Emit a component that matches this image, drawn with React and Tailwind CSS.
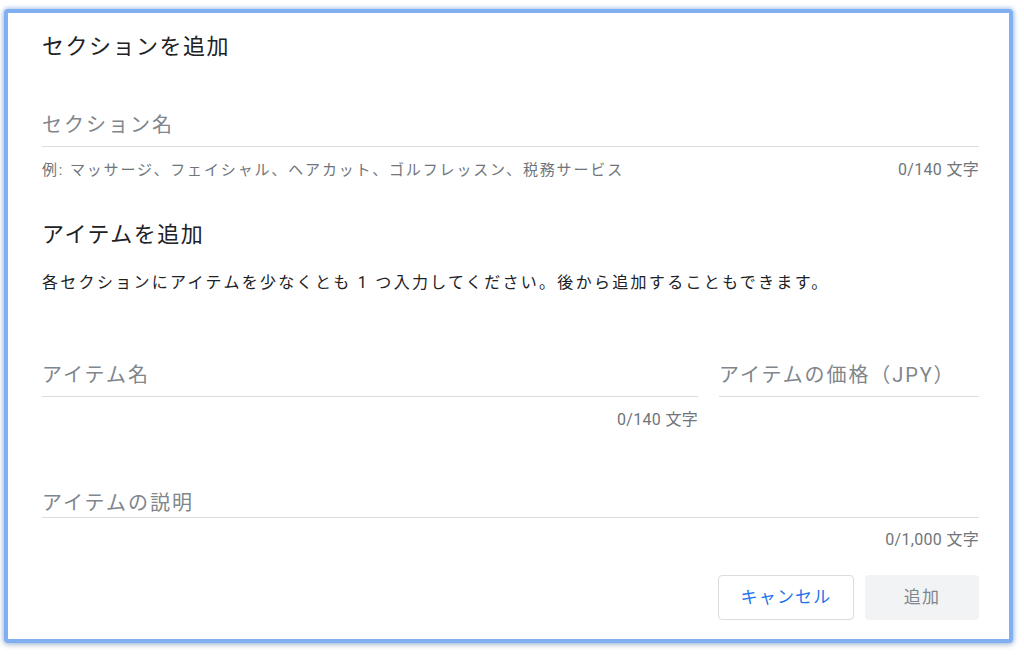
import React from "react";

const font = { fontFamily: 'Roboto, "Noto Sans CJK JP", "Noto Sans", sans-serif' };

export default function App() {
  return (
    <div className="w-[1024px] h-[655px] bg-white overflow-hidden pt-[9px] pl-[4px]" style={font}>
      <div className="w-[1009px] h-[634px] border-[4px] border-[#80b0f2] rounded-[4px] shadow-[0_0_4px_1px_rgba(100,150,230,0.5),0_2px_6px_rgba(0,0,0,0.15)] bg-white pl-[34px] pr-[30px] pt-[20px] flex flex-col">
        <h2 className="text-[22px] leading-[28px] tracking-[1.5px] text-[#202124] font-normal">セクションを追加</h2>

        <div className="mt-[50px] border-b border-[#dadce0] pb-[7px]">
          <div className="text-[20px] leading-[28px] tracking-[2px] text-[#80868b]">セクション名</div>
        </div>
        <div className="mt-[13px] flex justify-between text-[15px] leading-[20px] text-[#70757a]">
          <span className="tracking-[1.85px]">例: マッサージ、フェイシャル、ヘアカット、ゴルフレッスン、税務サービス</span>
          <span className="text-[16px] tracking-[0.3px]">0/140 文字</span>
        </div>

        <h2 className="mt-[41px] text-[22px] leading-[28px] tracking-[1.5px] text-[#202124] font-normal">アイテムを追加</h2>
        <p className="mt-[23px] text-[16px] leading-[22px] tracking-[2.3px] text-[#202124]">
          各セクションにアイテムを少なくとも 1 つ入力してください。後から追加することもできます。
        </p>

        <div className="mt-[67px] flex gap-[21px]">
          <div className="w-[656px] flex flex-col">
            <div className="border-b border-[#dadce0] pb-[7px]">
              <div className="text-[20px] leading-[28px] tracking-[2px] text-[#80868b]">アイテム名</div>
            </div>
            <div className="mt-[13px] text-right text-[16px] leading-[20px] tracking-[0.3px] text-[#70757a]">0/140 文字</div>
          </div>
          <div className="flex-1">
            <div className="border-b border-[#dadce0] pb-[7px]">
              <div className="text-[20px] leading-[28px] tracking-[1.9px] text-[#80868b] whitespace-nowrap">アイテムの価格（JPY）</div>
            </div>
          </div>
        </div>

        <div className="mt-[59px] border-b border-[#dadce0]">
          <div className="text-[20px] leading-[28px] tracking-[2px] text-[#80868b]">アイテムの説明</div>
        </div>
        <div className="mt-[12px] text-right text-[16px] leading-[20px] tracking-[0.3px] text-[#70757a]">0/1,000 文字</div>

        <div className="mt-[25px] flex justify-end gap-[11px]">
          <button className="w-[136px] h-[45px] rounded-[4px] border border-[#dadce0] bg-white text-[#1a73e8] text-[17px] tracking-[1.2px]">キャンセル</button>
          <button className="w-[114px] h-[45px] rounded-[4px] bg-[#f1f3f4] text-[#80868b] text-[17px] tracking-[1.2px]">追加</button>
        </div>
      </div>
    </div>
  );
}
